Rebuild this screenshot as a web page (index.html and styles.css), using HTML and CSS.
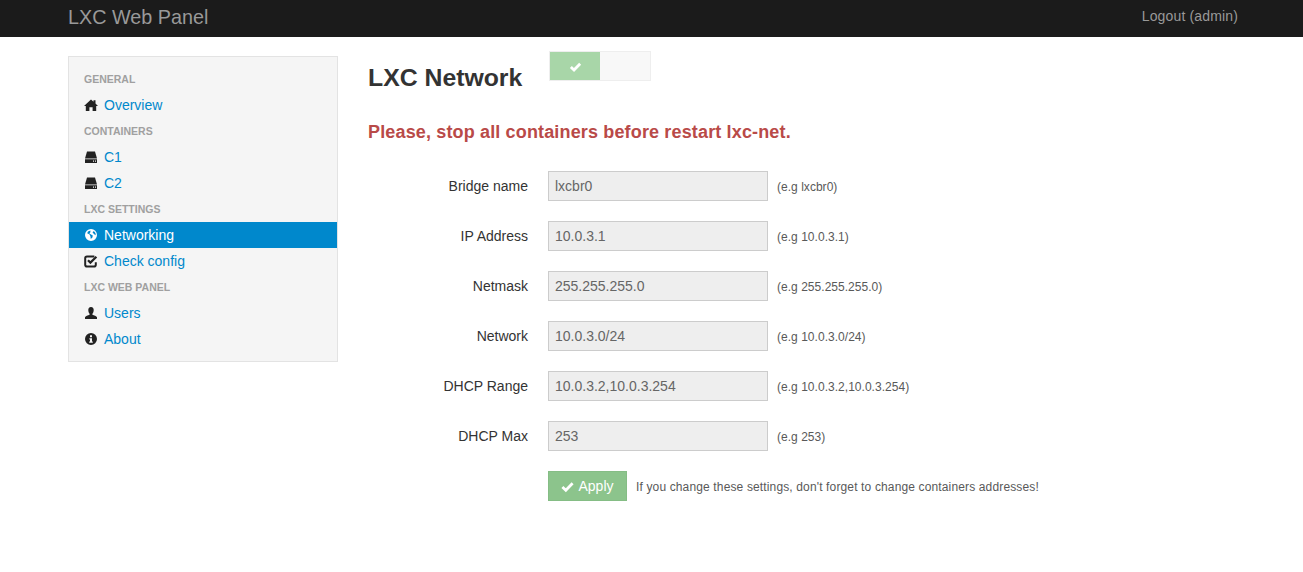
FILE: index.html
```html
<!DOCTYPE html>
<html>

<head>
    <title>LXC Web Panel</title>
    <link rel="stylesheet" href="styles.css">
</head>

<body>
    <div class="navbar">
        <a class="brand" href="#">LXC Web Panel</a>
        <a class="logout" href="#">Logout (admin)</a>
    </div>

    <div class="page">
        <div class="sidebar">
            <div class="nav-header">General</div>
            <a class="nav-item" href="#">
                <svg class="icon" viewBox="0 0 14 14"><path d="M7 1.5L9.5 3.8V2.2H11.5V5.6L14 8H12.2V13H8.6V9.2H5.4V13H1.8V8H0Z"/></svg>
                Overview
            </a>
            <div class="nav-header">Containers</div>
            <a class="nav-item" href="#">
                <svg class="icon" viewBox="0 0 14 14"><path d="M3 1.5H11L13 8.5H1Z"/><path fill-rule="evenodd" d="M1 9.3H13V13H1ZM9 10.5V11.7H10V10.5ZM11 10.5V11.7H12V10.5Z"/></svg>
                C1
            </a>
            <a class="nav-item" href="#">
                <svg class="icon" viewBox="0 0 14 14"><path d="M3 1.5H11L13 8.5H1Z"/><path fill-rule="evenodd" d="M1 9.3H13V13H1ZM9 10.5V11.7H10V10.5ZM11 10.5V11.7H12V10.5Z"/></svg>
                C2
            </a>
            <div class="nav-header">LXC Settings</div>
            <a class="nav-item active" href="#">
                <svg class="icon" viewBox="0 0 14 14"><path fill-rule="evenodd" d="M7 1A6 6 0 1 1 7 13A6 6 0 0 1 7 1ZM6.4 2.6L4 3.4L3.2 5.2L5.6 6.4L6.4 8.2L6.8 11L8.4 9.4L8.8 7.4L6.6 6.2L5.4 5.4L6.4 4.2ZM9.2 3.2L8.6 4.6L10.2 6.2L11.6 7.2L11.6 5.4L10.6 3.8Z"/></svg>
                Networking
            </a>
            <a class="nav-item" href="#">
                <svg class="icon" viewBox="0 0 14 14"><path d="M10.4 2.4H3A1.8 1.8 0 0 0 1.2 4.2V10.8A1.8 1.8 0 0 0 3 12.6H10A1.8 1.8 0 0 0 11.8 10.8V8.2" fill="none" stroke-width="2"/><path d="M4 6.2L6.4 8.6L12.4 2.8" fill="none" stroke-width="2.2"/></svg>
                Check config
            </a>
            <div class="nav-header">LXC Web Panel</div>
            <a class="nav-item" href="#">
                <svg class="icon" viewBox="0 0 14 14"><path d="M7 1C8.9 1 9.8 2.4 9.7 4.2C9.6 6 9 7.2 8.4 7.8V8.8C10 9.6 12.6 10 13 11.2V13H1V11.2C1.4 10 4 9.6 5.6 8.8V7.8C5 7.2 4.4 6 4.3 4.2C4.2 2.4 5.1 1 7 1Z"/></svg>
                Users
            </a>
            <a class="nav-item" href="#">
                <svg class="icon" viewBox="0 0 14 14"><path fill-rule="evenodd" d="M7 1A6 6 0 1 1 7 13A6 6 0 0 1 7 1ZM6 3.2V5.2H8V3.2ZM5.4 6.2V7.4H6V9.6H5.2V10.8H8.8V9.6H8V6.2Z"/></svg>
                About
            </a>
        </div>

        <div class="content">
            <div class="title-row">
                <h1>LXC Network</h1>
                <div class="toggle">
                    <div class="toggle-on">
                        <svg class="toggle-check" viewBox="0 0 14 14"><path d="M2 7.5L5.4 10.8L12 4" fill="none"/></svg>
                    </div>
                    <div class="toggle-off"></div>
                </div>
            </div>

            <h4 class="warning">Please, stop all containers before restart lxc-net.</h4>

            <form class="net-form">
                <div class="form-row">
                    <label>Bridge name</label>
                    <input type="text" value="lxcbr0" disabled>
                    <span class="help">(e.g lxcbr0)</span>
                </div>
                <div class="form-row">
                    <label>IP Address</label>
                    <input type="text" value="10.0.3.1" disabled>
                    <span class="help">(e.g 10.0.3.1)</span>
                </div>
                <div class="form-row">
                    <label>Netmask</label>
                    <input type="text" value="255.255.255.0" disabled>
                    <span class="help">(e.g 255.255.255.0)</span>
                </div>
                <div class="form-row">
                    <label>Network</label>
                    <input type="text" value="10.0.3.0/24" disabled>
                    <span class="help">(e.g 10.0.3.0/24)</span>
                </div>
                <div class="form-row">
                    <label>DHCP Range</label>
                    <input type="text" value="10.0.3.2,10.0.3.254" disabled>
                    <span class="help">(e.g 10.0.3.2,10.0.3.254)</span>
                </div>
                <div class="form-row">
                    <label>DHCP Max</label>
                    <input type="text" value="253" disabled>
                    <span class="help">(e.g 253)</span>
                </div>
                <div class="form-row">
                    <label></label>
                    <button class="btn-apply" type="button">
                        <svg class="btn-check" viewBox="0 0 14 14"><path d="M1.5 7.5L5.2 11L12.5 3.5" fill="none"/></svg>
                        Apply
                    </button>
                    <span class="help help-note">If you change these settings, don't forget to change containers addresses!</span>
                </div>
            </form>
        </div>
    </div>
</body>

</html>
```

FILE: styles.css
```css
body{
    margin: 0;
    font-family: "Liberation Sans", Arial, sans-serif;
    font-size: 14px;
    line-height: 20px;
    color: #333;
    background-color: #fff;
}
a{
    text-decoration: none;
}
.navbar{
    height: 33px;
    background-color: #1b1b1b;
    display: flex;
    align-items: center;
    justify-content: space-between;
    padding: 0 65px 4px 68px;
}
.brand{
    font-size: 19.8px;
    color: #999;
}
.logout{
    margin-bottom: 2px;
    color: #999;
    letter-spacing: .15px;
}
.page{
    display: flex;
    align-items: flex-start;
    gap: 30px;
    padding-left: 68px;
}
.sidebar{
    width: 268px;
    margin-top: 19px;
    padding: 9px 0;
    background-color: #f5f5f5;
    border: 1px solid #e3e3e3;
}
.nav-header{
    height: 26px;
    line-height: 26px;
    padding-left: 15px;
    font-size: 10.5px;
    font-weight: bold;
    text-transform: uppercase;
    color: #a0a0a0;
}
.nav-item{
    height: 26px;
    display: flex;
    align-items: center;
    gap: 5px;
    padding-left: 15px;
    color: #0088cc;
}
.nav-item svg{
    margin-right: 1px;
}
.nav-item.active{
    background-color: #0088cc;
    color: #fff;
}
.icon{
    width: 14px;
    height: 14px;
    flex: none;
    fill: #222;
    stroke: #222;
    stroke-width: 0;
}
.active .icon{
    fill: #fff;
    stroke: #fff;
}
.content{
    margin-top: 14px;
}
.title-row{
    display: flex;
    align-items: flex-start;
    gap: 27px;
    height: 61px;
}
h1{
    margin: 7px 0 0 0;
    font-size: 24.8px;
    line-height: 40px;
    font-weight: bold;
    color: #333;
}
.toggle{
    display: flex;
    width: 100px;
    height: 28px;
    border: 1px solid #eee;
}
.toggle-on{
    width: 50px;
    background-color: #a8d6a8;
    display: flex;
    align-items: center;
    justify-content: center;
}
.toggle-off{
    width: 50px;
    background-color: #f8f8f8;
}
.toggle-check{
    width: 13px;
    height: 13px;
    stroke: #fff;
    stroke-width: 3;
}
.warning{
    margin: 0 0 19px 0;
    font-size: 18px;
    letter-spacing: .15px;
    line-height: 40px;
    font-weight: bold;
    color: #b94a48;
}
.net-form{
    display: flex;
    flex-direction: column;
    gap: 20px;
}
.form-row{
    display: flex;
    align-items: center;
    height: 30px;
}
.form-row label{
    width: 160px;
    text-align: right;
    margin-right: 20px;
}
.form-row input{
    width: 220px;
    height: 30px;
    box-sizing: border-box;
    padding: 0 6px;
    border: 1px solid #ccc;
    background-color: #eee;
    color: #666;
    font-family: inherit;
    font-size: 14px;
    opacity: 1;
}
.help{
    margin-left: 9px;
    padding-top: 2px;
    font-size: 12px;
    letter-spacing: .03px;
    color: #595959;
}
.help-note{
    letter-spacing: .14px;
}
.btn-apply{
    width: 79px;
    height: 30px;
    display: flex;
    align-items: center;
    justify-content: center;
    gap: 4px;
    padding: 0;
    border: 1px solid #85bd85;
    background-color: #8cc48c;
    color: #fff;
    font-family: inherit;
    font-size: 14px;
}
.btn-check{
    width: 13px;
    height: 13px;
    stroke: #fff;
    stroke-width: 3;
}
```
